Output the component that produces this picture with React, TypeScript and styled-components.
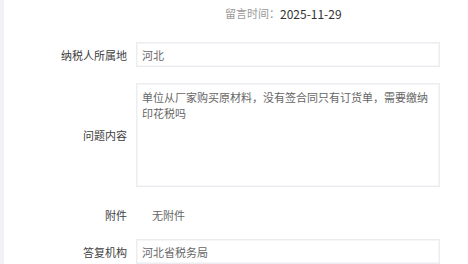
import React from "react";
import styled, { createGlobalStyle } from "styled-components";

const Global = createGlobalStyle`
  html, body { margin: 0; padding: 0; background: #fff; }
  body { font-family: "Microsoft YaHei", "Noto Sans CJK SC", "Noto Sans", sans-serif; }
`;

const Page = styled.div`
  display: flex;
  width: 468px;
  height: 264px;
  overflow: hidden;
`;

const Strip = styled.div`
  width: 4px;
  flex: none;
  background: #f0f2f5;
`;

const Content = styled.div`
  flex: 1;
  display: flex;
  flex-direction: column;
`;

const MetaRow = styled.div`
  height: 26px;
  display: flex;
  align-items: center;
  padding-left: 221px;
  font-size: 11px;
  color: #999;
`;

const MetaValue = styled.span`
  color: #303133;
  font-size: 12px;
`;

const Row = styled.div<{ $mt: number }>`
  display: flex;
  align-items: center;
  margin-top: ${(p) => p.$mt}px;
`;

const Label = styled.div`
  width: 123px;
  flex: none;
  text-align: right;
  font-size: 11px;
  line-height: 16px;
  color: #404040;
  padding-right: 9px;
`;

const Field = styled.div<{ $h: number }>`
  width: 304px;
  height: ${(p) => p.$h}px;
  flex: none;
  box-sizing: border-box;
  border: 1px solid #ebedf0;
  box-shadow: inset 0 0 0 1px #f5f6f8;
  padding: 0 5px;
  display: flex;
  align-items: center;
  font-size: 11px;
  color: #666;
`;

const Area = styled.div`
  width: 304px;
  height: 104px;
  flex: none;
  box-sizing: border-box;
  border: 1px solid #ebedf0;
  box-shadow: inset 0 0 0 1px #f5f6f8;
  padding: 5px 5px;
  font-size: 11px;
  line-height: 16px;
  color: #666;
`;

const Plain = styled.div`
  padding-left: 16px;
  font-size: 11px;
  line-height: 16px;
  color: #666;
`;

export default function App() {
  return (
    <>
      <Global />
      <Page>
        <Strip />
        <Content>
          <MetaRow>
            留言时间：<MetaValue>2025-11-29</MetaValue>
          </MetaRow>
          <Row $mt={16}>
            <Label>纳税人所属地</Label>
            <Field $h={25}>河北</Field>
          </Row>
          <Row $mt={16}>
            <Label>问题内容</Label>
            <Area>单位从厂家购买原材料，没有签合同只有订货单，需要缴纳印花税吗</Area>
          </Row>
          <Row $mt={20}>
            <Label>附件</Label>
            <Plain>无附件</Plain>
          </Row>
          <Row $mt={16}>
            <Label>答复机构</Label>
            <Field $h={25}>河北省税务局</Field>
          </Row>
        </Content>
      </Page>
    </>
  );
}
